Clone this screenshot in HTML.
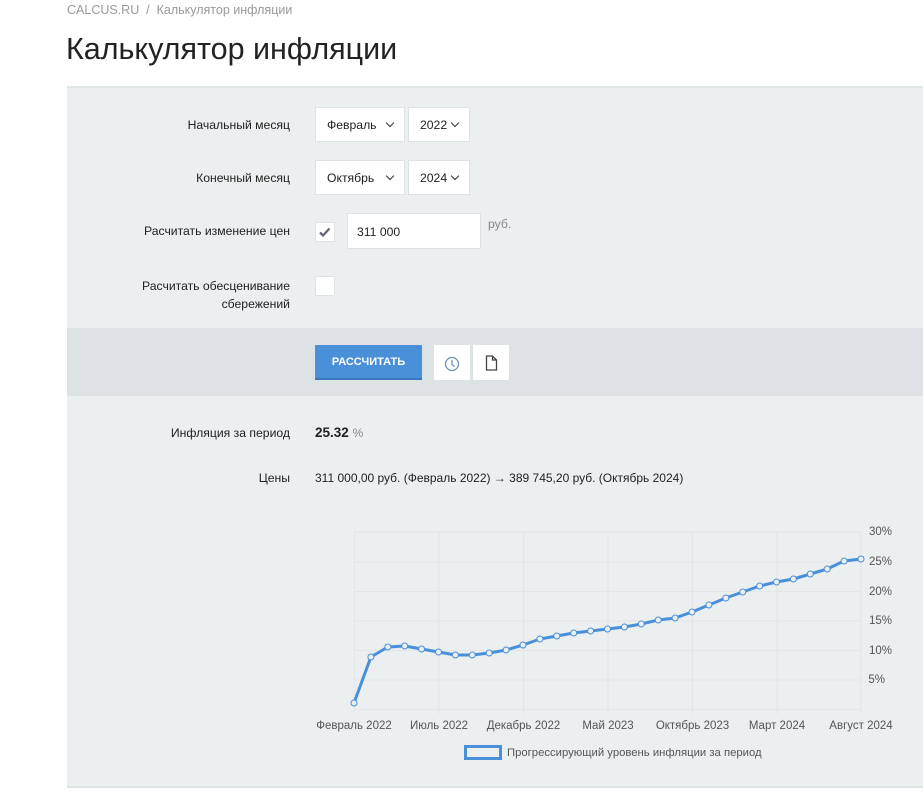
<!DOCTYPE html>
<html><head><meta charset="utf-8">
<style>
*{box-sizing:border-box;margin:0;padding:0}
body{width:923px;height:800px;background:#fff;font-family:"Liberation Sans","DejaVu Sans",sans-serif;color:#222;position:relative;overflow:hidden;font-size:12.2px}
.abs{position:absolute}
.crumb{left:67px;top:3px;font-size:12.5px;color:#999}
h1{position:absolute;left:66px;top:32px;font-size:30.5px;font-weight:400;color:#222}
.panel{left:67px;top:86px;width:856px;height:702px;background:#ebeff0;border-top:2px solid #dfe4e6;border-bottom:2px solid #dfe4e6}
.band{left:67px;top:328px;width:856px;height:68px;background:#dde3e5}
.lbl{width:223px;text-align:right;color:#222;left:67px}
.box{background:#fff;border:1px solid #dde2e4;color:#222}
.sel{height:35px;padding:10px 0 0 11px}
.sel:after{content:"";position:absolute;right:11px;top:12px;width:5px;height:5px;border-right:1.5px solid #333;border-bottom:1.5px solid #333;transform:rotate(45deg)}
.btn{left:315px;top:345px;width:107px;height:35px;background:#4a90d9;color:#fff;font-weight:700;font-size:11px;text-align:center;line-height:35px;border-bottom:2px solid #3a78bd}
</style></head><body>
<div class="abs crumb">CALCUS.RU &nbsp;/&nbsp; Калькулятор инфляции</div>
<h1>Калькулятор инфляции</h1>
<div class="abs panel"></div>
<div class="abs band"></div>

<div class="abs lbl" style="top:118px">Начальный месяц</div>
<div class="abs box sel" style="left:315px;top:107px;width:90px">Февраль</div>
<div class="abs box sel" style="left:408px;top:107px;width:62px">2022</div>

<div class="abs lbl" style="top:171px">Конечный месяц</div>
<div class="abs box sel" style="left:315px;top:160px;width:90px">Октябрь</div>
<div class="abs box sel" style="left:408px;top:160px;width:62px">2024</div>

<div class="abs lbl" style="top:224px">Расчитать изменение цен</div>
<div class="abs box" style="left:315px;top:222px;width:20px;height:20px"><svg width="18" height="18" viewBox="0 0 18 18"><path d="M4 9.5l3 3 6.5-7" stroke="#667" stroke-width="2.3" fill="none"/></svg></div>
<div class="abs box" style="left:347px;top:213px;width:134px;height:36px;padding:11px 0 0 9px">311 000</div>
<div class="abs" style="left:488px;top:217px;color:#888">руб.</div>

<div class="abs lbl" style="top:277px;line-height:18px">Расчитать обесценивание<br>сбережений</div>
<div class="abs box" style="left:315px;top:276px;width:20px;height:20px"></div>

<div class="abs btn">РАССЧИТАТЬ</div>
<div class="abs box" style="left:434px;top:345px;width:36px;height:35px;border:none"><svg width="36" height="35"><circle cx="18" cy="19" r="6.5" stroke="#6a8fb8" stroke-width="1.3" fill="none"/><path d="M18 15v4.5l2.5 2" stroke="#6a8fb8" stroke-width="1.3" fill="none"/></svg></div>
<div class="abs box" style="left:473px;top:345px;width:36px;height:35px;border:none"><svg width="36" height="35"><path d="M13.5 11h6l4 4v10h-10z M19.5 11v4h4" stroke="#444" stroke-width="1.3" fill="none"/></svg></div>

<div class="abs lbl" style="top:426px">Инфляция за период</div>
<div class="abs" style="left:315px;top:425px;font-size:13.5px"><b>25.32</b> <span style="color:#888;font-size:12px">%</span></div>
<div class="abs lbl" style="top:471px">Цены</div>
<div class="abs" style="left:315px;top:471px;font-size:12px">311 000,00 руб. (Февраль 2022) → 389 745,20 руб. (Октябрь 2024)</div>

<svg class="abs" style="left:0;top:0" width="923" height="800">
<g stroke="#e2e6e8" stroke-width="1">
<line x1="354" y1="532" x2="861" y2="532"/><line x1="354" y1="562" x2="861" y2="562"/><line x1="354" y1="591.5" x2="861" y2="591.5"/><line x1="354" y1="621" x2="861" y2="621"/><line x1="354" y1="650.5" x2="861" y2="650.5"/><line x1="354" y1="680" x2="861" y2="680"/><line x1="354" y1="709.5" x2="861" y2="709.5"/>
<line x1="354.5" y1="532" x2="354.5" y2="714"/><line x1="439" y1="532" x2="439" y2="714"/><line x1="523.5" y1="532" x2="523.5" y2="714"/><line x1="608" y1="532" x2="608" y2="714"/><line x1="692.5" y1="532" x2="692.5" y2="714"/><line x1="777" y1="532" x2="777" y2="714"/><line x1="861" y1="532" x2="861" y2="714"/>
</g>
<g font-family="Liberation Sans,sans-serif" font-size="11.5" fill="#555">
<text x="892" y="535" text-anchor="end">30%</text><text x="892" y="565" text-anchor="end">25%</text><text x="892" y="595" text-anchor="end">20%</text><text x="892" y="624" text-anchor="end">15%</text><text x="892" y="654" text-anchor="end">10%</text><text x="885" y="683" text-anchor="end">5%</text>
<text x="354" y="729" text-anchor="middle">Февраль 2022</text><text x="439" y="729" text-anchor="middle">Июль 2022</text><text x="523.5" y="729" text-anchor="middle">Декабрь 2022</text><text x="608" y="729" text-anchor="middle">Май 2023</text><text x="692.5" y="729" text-anchor="middle">Октябрь 2023</text><text x="777" y="729" text-anchor="middle">Март 2024</text><text x="861" y="729" text-anchor="middle">Август 2024</text>
<text x="507" y="756" font-size="11.3">Прогрессирующий уровень инфляции за период</text>
</g>
<rect x="465.5" y="746.5" width="35" height="12" fill="#ebeff0" stroke="#4a90d9" stroke-width="3"/>
<polyline id="pl" fill="none" stroke="#4a90d9" stroke-width="3" stroke-linejoin="round" points=""/>
<g id="pts"></g>
</svg>
<script>
var ys=[703,657,647,646,649,652,655,655,653,650,645,639,636,633,631,629,627,624,620,618,612,605,598,592,586,582,579,574,569,561,559];
var p=[],g='';
for(var i=0;i<ys.length;i++){var x=354+i*16.9;p.push(x+','+ys[i]);g+='<circle cx="'+x+'" cy="'+ys[i]+'" r="3" fill="#ebeff0" stroke="#4a90d9" stroke-width="1"/>';}
document.getElementById('pl').setAttribute('points',p.join(' '));
document.getElementById('pts').innerHTML=g;
</script>
</body></html>
